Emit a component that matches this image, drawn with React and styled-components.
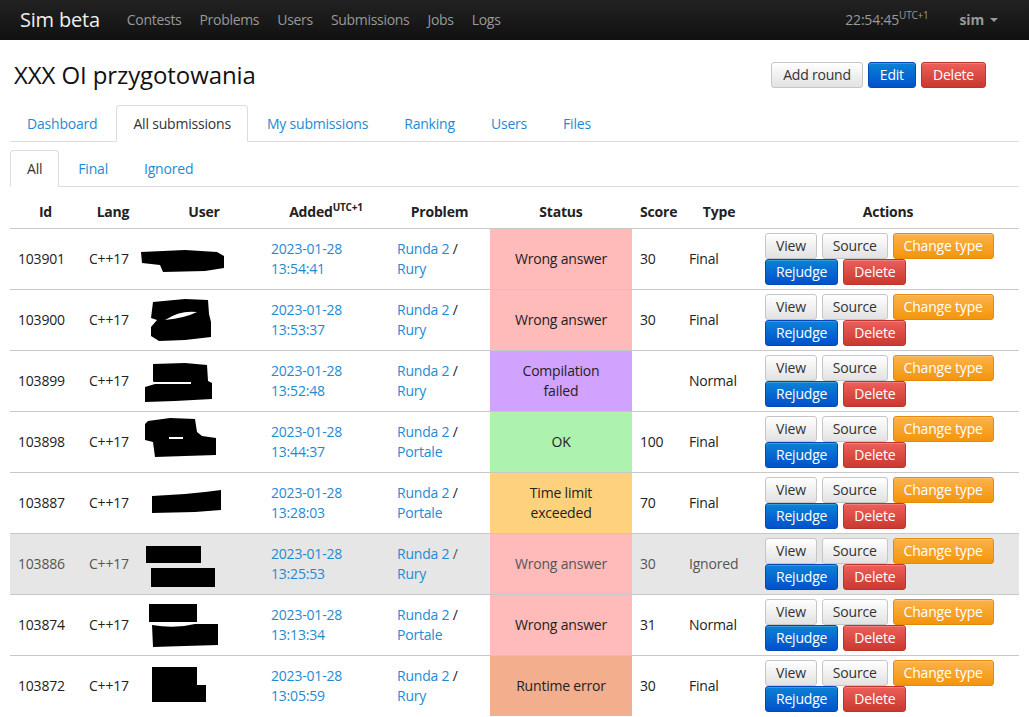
import React from "react";
import styled, { createGlobalStyle, css } from "styled-components";

const GlobalStyle = createGlobalStyle`
    body {
        margin: 0;
        font-family: "Open Sans", "Liberation Sans", sans-serif;
        font-size: 14px;
        line-height: 20px;
        letter-spacing: -0.2px;
        color: #333;
        background: #fff;
    }
`;

const Navbar = styled.div`
    height: 40px;
    display: flex;
    align-items: center;
    padding: 0 10px;
    background: linear-gradient(#222, #111);
    color: #999;
`;

const Brand = styled.span`
    font-size: 20px;
    color: #eee;
    padding: 0 0 0 10px;
    margin-right: 18px;
`;

const NavLink = styled.a`
    padding: 0 9px;
    color: #999;
    letter-spacing: -0.3px;
    text-decoration: none;
`;

const NavRight = styled.div`
    margin-left: auto;
    display: flex;
    align-items: center;
    padding-right: 21px;
    gap: 31px;
`;

const Sup = styled.sup`
    font-size: 10px;
    line-height: 0;
    vertical-align: 0.6em;
`;

const UserMenu = styled.span`
    font-weight: bold;
    display: flex;
    align-items: center;
    gap: 6px;
`;

const Caret = styled.span`
    width: 0;
    height: 0;
    border-left: 4px solid transparent;
    border-right: 4px solid transparent;
    border-top: 4px solid #999;
`;

const Main = styled.div`
    padding: 0 10px;
`;

const HeaderRow = styled.div`
    display: flex;
    align-items: center;
    justify-content: space-between;
    height: 61px;
    padding-top: 4px;
`;

const Title = styled.h1`
    margin: 0 0 0 4px;
    font-size: 24px;
    font-weight: normal;
    letter-spacing: -0.1px;
    color: #111;
`;

const btnColors = {
    default: css`
        color: #333;
        background: linear-gradient(#fff, #e2e2e2);
        border-color: #c6c6c6;
    `,
    primary: css`
        color: #fff;
        background: linear-gradient(#0b82d6, #0151cb);
        border-color: #0249b5;
    `,
    danger: css`
        color: #fff;
        background: linear-gradient(#ee5f5b, #c9392f);
        border-color: #b9352d;
    `,
    warning: css`
        color: #fff;
        background: linear-gradient(#fbb24b, #f3950c);
        border-color: #e48a0c;
    `,
};

const Button = styled.button`
    font-family: inherit;
    font-size: 14px;
    letter-spacing: -0.2px;
    line-height: 18px;
    padding: 3px 11px;
    border: 1px solid;
    border-radius: 3px;
    cursor: pointer;
    white-space: nowrap;
    box-shadow: inset 0 1px 0 rgba(255, 255, 255, 0.2);
    ${(p) => btnColors[p.$kind || "default"]}
`;

const HeaderButtons = styled.div`
    display: flex;
    gap: 5px;
    margin-right: 33px;
`;

const Tabs = styled.ul`
    display: flex;
    list-style: none;
    margin: 0;
    padding: 0;
    border-bottom: 1px solid #ddd;
    margin-top: ${(p) => p.$top}px;
`;

const Tab = styled.li`
    margin-right: 2px;
    margin-bottom: -1px;
    padding: 0 16px;
    height: ${(p) => p.$h}px;
    display: flex;
    align-items: center;
    border: 1px solid transparent;
    border-radius: 4px 4px 0 0;
    color: #1f8ad3;
    ${(p) =>
        p.$active &&
        css`
            color: #333;
            background: #fff;
            border-color: #ddd;
            border-bottom-color: #fff;
        `}
`;

const Table = styled.table`
    width: 100%;
    border-collapse: separate;
    border-spacing: 0;
    margin-top: 0;
    table-layout: fixed;
`;

const Th = styled.th`
    padding: 15px 8px 6px;
    text-align: center;
    font-weight: bold;
    color: #222;
    border-bottom: 1px solid #c8c8c8;
`;

const Tr = styled.tr`
    background: ${(p) => (p.$ignored ? "#e6e6e6" : "#fff")};
    color: ${(p) => (p.$ignored ? "#555" : "#222")};
`;

const Td = styled.td`
    height: 60px;
    padding: 0 8px;
    vertical-align: middle;
    border-top: 1px solid #c8c8c8;
    ${(p) => p.$first && css`border-top: none;`}
`;

const statusColors = {
    WA: "#ffbaba",
    CE: "#d1a3fe",
    OK: "#aef2af",
    TLE: "#fed17d",
    RE: "#f3ae8e",
};

const StatusTd = styled(Td)`
    background: ${(p) => statusColors[p.$status]};
    text-align: center;
    line-height: 20px;
`;

const Link = styled.a`
    color: #1f8ad3;
    text-decoration: none;
`;

const Actions = styled.div`
    display: flex;
    flex-direction: column;
    gap: 0;
`;

const ActionRow = styled.div`
    display: flex;
    gap: 5px;
`;

const SmallBtn = styled(Button)`
    padding: 2px 10px;
    line-height: 20px;
`;

const Redacted = styled.svg`
    display: block;
    overflow: visible;
`;

const blobs = [
    [<path key="a" d="M -4,23 L 40,21 L 72,23 L 79,27 L 79,39 L 60,42 L 18,43 L 15,36 L -3,34 Z" />],
    [
        <path key="a" d="M 8,12 L 40,9 L 63,10 L 64,24 L 66,32 L 66,47 L 40,50 L 14,51 L 6,46 L 6,37 L 12,30 L 6,28 Z" />,
        <path key="b" d="M 20,30 Q 35,20 52,22 Q 40,28 20,30 Z" fill="#fff" />,
    ],
    [
        <path key="a" d="M 8,13 L 40,12 L 62,14 L 63,30 L 67,32 L 67,48 L 30,50 L 0,51 L 0,36 L 10,33 L 8,30 Z" />,
        <rect key="b" x="8" y="31" width="38" height="2" fill="#fff" />,
    ],
    [
        <path key="a" d="M 3,9 L 25,6 L 50,7 L 52,20 L 57,24 L 71,26 L 71,43 L 40,44 L 10,45 L 8,30 L 0,28 L 0,12 Z" />,
        <rect key="b" x="24" y="25" width="14" height="2" fill="#fff" />,
    ],
    [<path key="a" d="M 7,23 L 40,21 L 60,19 L 76,17 L 76,37 L 50,39 L 7,40 Z" />],
    [
        <rect key="a" x="1" y="12" width="55" height="17" />,
        <rect key="b" x="6" y="34" width="64" height="19" />,
    ],
    [
        <rect key="a" x="4" y="9" width="48" height="18" />,
        <path key="b" d="M 7,30 Q 30,34 50,29 L 73,29 L 73,50 L 40,51 L 8,52 Z" />,
    ],
    [
        <rect key="a" x="7" y="11" width="45" height="20" />,
        <rect key="b" x="7" y="29" width="54" height="17" />,
    ],
];

const rows = [
    { id: 103901, date: "13:54:41", problem: "Rury", status: "WA", statusText: "Wrong answer", score: 30, type: "Final" },
    { id: 103900, date: "13:53:37", problem: "Rury", status: "WA", statusText: "Wrong answer", score: 30, type: "Final" },
    { id: 103899, date: "13:52:48", problem: "Rury", status: "CE", statusText: "Compilation failed", score: "", type: "Normal" },
    { id: 103898, date: "13:44:37", problem: "Portale", status: "OK", statusText: "OK", score: 100, type: "Final" },
    { id: 103887, date: "13:28:03", problem: "Portale", status: "TLE", statusText: "Time limit exceeded", score: 70, type: "Final" },
    { id: 103886, date: "13:25:53", problem: "Rury", status: "WA", statusText: "Wrong answer", score: 30, type: "Ignored" },
    { id: 103874, date: "13:13:34", problem: "Portale", status: "WA", statusText: "Wrong answer", score: 31, type: "Normal" },
    { id: 103872, date: "13:05:59", problem: "Rury", status: "RE", statusText: "Runtime error", score: 30, type: "Final" },
];

const StatusText = styled.span`
    display: inline-block;
    width: ${(p) => (p.$narrow ? "90px" : "auto")};
`;

export default function App() {
    return (
        <>
            <GlobalStyle />
            <Navbar>
                <Brand>Sim beta</Brand>
                {["Contests", "Problems", "Users", "Submissions", "Jobs", "Logs"].map((n) => (
                    <NavLink key={n}>{n}</NavLink>
                ))}
                <NavRight>
                    <span>
                        22:54:45<Sup>UTC+1</Sup>
                    </span>
                    <UserMenu>
                        sim <Caret />
                    </UserMenu>
                </NavRight>
            </Navbar>
            <Main>
                <HeaderRow>
                    <Title>XXX OI przygotowania</Title>
                    <HeaderButtons>
                        <Button>Add round</Button>
                        <Button $kind="primary">Edit</Button>
                        <Button $kind="danger">Delete</Button>
                    </HeaderButtons>
                </HeaderRow>
                <Tabs $top={0}>
                    <Tab $h={35}>Dashboard</Tab>
                    <Tab $h={35} $active>All submissions</Tab>
                    <Tab $h={35}>My submissions</Tab>
                    <Tab $h={35}>Ranking</Tab>
                    <Tab $h={35}>Users</Tab>
                    <Tab $h={35}>Files</Tab>
                </Tabs>
                <Tabs $top={8}>
                    <Tab $h={35} $active>All</Tab>
                    <Tab $h={35}>Final</Tab>
                    <Tab $h={35}>Ignored</Tab>
                </Tabs>
                <Table>
                    <colgroup>
                        <col style={{ width: 71 }} />
                        <col style={{ width: 64 }} />
                        <col style={{ width: 118 }} />
                        <col style={{ width: 126 }} />
                        <col style={{ width: 101 }} />
                        <col style={{ width: 142 }} />
                        <col style={{ width: 49 }} />
                        <col style={{ width: 76 }} />
                        <col />
                    </colgroup>
                    <thead>
                        <tr>
                            <Th>Id</Th>
                            <Th>Lang</Th>
                            <Th>User</Th>
                            <Th>
                                Added<Sup>UTC+1</Sup>
                            </Th>
                            <Th>Problem</Th>
                            <Th>Status</Th>
                            <Th>Score</Th>
                            <Th>Type</Th>
                            <Th>Actions</Th>
                        </tr>
                    </thead>
                    <tbody>
                        {rows.map((r, i) => (
                            <Tr key={r.id} $ignored={r.type === "Ignored"}>
                                <Td $first={i === 0}>{r.id}</Td>
                                <Td $first={i === 0}>C++17</Td>
                                <Td $first={i === 0} style={{ padding: 0 }}>
                                    <Redacted width="118" height="60" viewBox="0 0 118 60">
                                        <g fill="#000">{blobs[i]}</g>
                                    </Redacted>
                                </Td>
                                <Td $first={i === 0}>
                                    <Link>2023-01-28</Link>
                                    <br />
                                    <Link>{r.date}</Link>
                                </Td>
                                <Td $first={i === 0}>
                                    <Link>Runda 2</Link> /<br />
                                    <Link>{r.problem}</Link>
                                </Td>
                                <StatusTd $first={i === 0} $status={r.status}>
                                    <StatusText $narrow={r.status === "CE" || r.status === "TLE"}>
                                        {r.statusText}
                                    </StatusText>
                                </StatusTd>
                                <Td $first={i === 0}>{r.score}</Td>
                                <Td $first={i === 0}>{r.type}</Td>
                                <Td $first={i === 0}>
                                    <Actions>
                                        <ActionRow>
                                            <SmallBtn>View</SmallBtn>
                                            <SmallBtn>Source</SmallBtn>
                                            <SmallBtn $kind="warning">Change type</SmallBtn>
                                        </ActionRow>
                                        <ActionRow>
                                            <SmallBtn $kind="primary">Rejudge</SmallBtn>
                                            <SmallBtn $kind="danger">Delete</SmallBtn>
                                        </ActionRow>
                                    </Actions>
                                </Td>
                            </Tr>
                        ))}
                    </tbody>
                </Table>
            </Main>
        </>
    );
}
